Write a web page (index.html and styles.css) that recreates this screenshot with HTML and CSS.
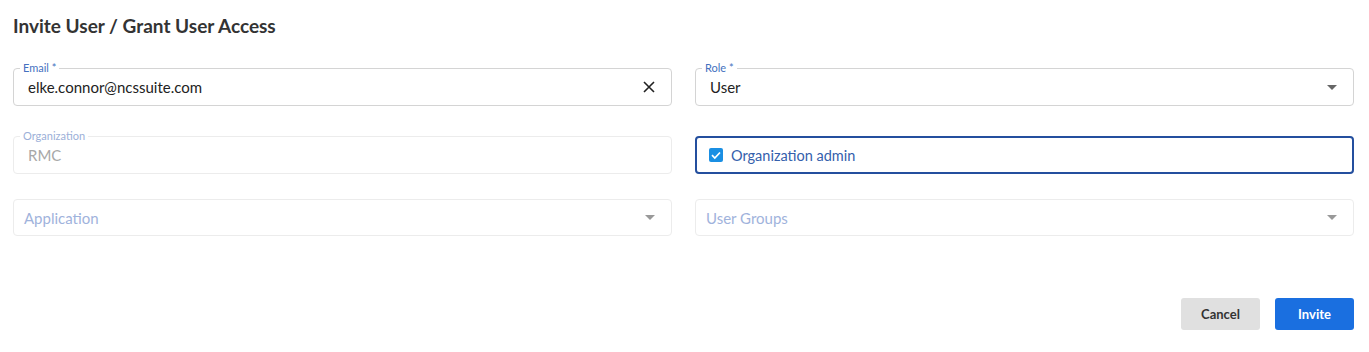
FILE: index.html
```html
<!DOCTYPE html>
<html>
<head>
<meta charset="utf-8">
<link rel="stylesheet" href="styles.css">
</head>
<body>
<div class="page">
  <h1 class="title">Invite User / Grant User Access</h1>
  <div class="grid">
    <div class="field">
      <span class="label">Email *</span>
      <span class="value">elke.connor@ncssuite.com</span>
      <svg class="clear" width="12" height="12" viewBox="0 0 12 12"><path d="M1 1L11 11M11 1L1 11" stroke="#222" stroke-width="1.6" fill="none"/></svg>
    </div>
    <div class="field">
      <span class="label">Role *</span>
      <span class="value">User</span>
      <span class="caret"></span>
    </div>
    <div class="field disabled">
      <span class="label light">Organization</span>
      <span class="value muted">RMC</span>
    </div>
    <div class="field checkfield">
      <span class="checkbox"><svg width="14" height="14" viewBox="0 0 14 14"><path d="M3 7.2L5.8 10L11 4.5" stroke="#fff" stroke-width="1.7" fill="none"/></svg></span>
      <span class="checktext">Organization admin</span>
    </div>
    <div class="field disabled row3">
      <span class="value placeholder">Application</span>
      <span class="caret light"></span>
    </div>
    <div class="field disabled row3">
      <span class="value placeholder">User Groups</span>
      <span class="caret light"></span>
    </div>
  </div>
  <div class="actions">
    <button class="btn cancel">Cancel</button>
    <button class="btn invite">Invite</button>
  </div>
</div>
</body>
</html>
```
FILE: styles.css
```css
html, body {
  margin: 0;
  padding: 0;
  background: #fff;
}
body {
  font-family: "Lato", "Open Sans", sans-serif;
}
.page {
  padding: 15px 15px 0 13px;
}
.title {
  margin: 0;
  font-size: 19px;
  font-weight: 700;
  color: #333;
  line-height: 22px;
}
.grid {
  display: grid;
  grid-template-columns: 1fr 1fr;
  column-gap: 23px;
  row-gap: 30px;
  margin-top: 31px;
}
.field {
  position: relative;
  height: 38px;
  box-sizing: border-box;
  border: 1px solid #d4d4d4;
  border-radius: 4px;
  display: flex;
  align-items: center;
  padding: 0 14px 0 14px;
}
.field.disabled {
  border-color: #ececec;
}
.row3 {
  margin-top: -5px;
  height: 37px;
}
.label {
  position: absolute;
  left: 6px;
  top: -7px;
  padding: 0 3px;
  background: #fff;
  font-size: 11px;
  line-height: 12px;
  color: #4471c0;
}
.label.light {
  color: #9cb0d8;
}
.value {
  flex: 1;
  font-size: 15px;
  color: #222;
}
.value.muted {
  color: #a8a8a8;
}
.value.placeholder {
  color: #9fb3dc;
  margin-left: -4px;
}
.clear {
  margin-right: 2px;
}
.caret {
  width: 0;
  height: 0;
  border-left: 5px solid transparent;
  border-right: 5px solid transparent;
  border-top: 5px solid #666;
  margin-right: 2px;
}
.caret.light {
  border-top-color: #999;
}
.checkfield {
  border: 2px solid #244f9e;
  padding-left: 12px;
}
.checkbox {
  width: 14px;
  height: 14px;
  border-radius: 2px;
  background: #1a8fe3;
  display: flex;
  align-items: center;
  justify-content: center;
}
.checktext {
  margin-left: 8px;
  font-size: 14.5px;
  color: #3460ac;
}
.actions {
  display: flex;
  justify-content: flex-end;
  gap: 15px;
  margin-top: 62px;
}
.btn {
  width: 79px;
  height: 32px;
  border: none;
  border-radius: 3px;
  font-family: "Lato", "Open Sans", sans-serif;
  font-size: 13px;
  font-weight: 700;
  cursor: pointer;
}
.cancel {
  background: #e0e0e0;
  color: #333;
}
.invite {
  background: #1a6fe0;
  color: #fff;
}
```
